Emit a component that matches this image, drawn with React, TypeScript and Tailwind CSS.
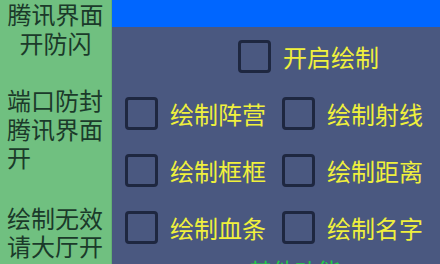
import React from "react";

const font = { fontFamily: '"Noto Sans CJK SC", "Noto Sans", sans-serif' };

function Box() {
  return <div className="h-[33px] w-[33px] shrink-0 rounded-[4px] border-[3px] border-[#1e2740]" />;
}

function Option({ label }: { label: string }) {
  return (
    <div className="flex items-center gap-[12px]">
      <Box />
      <span className="text-[24px] leading-[28px] text-[#f0f03c]">{label}</span>
    </div>
  );
}

export default function App() {
  return (
    <div className="flex h-[264px] w-[440px] overflow-hidden bg-[#4a5880]" style={font}>
      <div className="flex w-[112px] shrink-0 flex-col border-r border-[#64b074] bg-[#70c080] text-[24px] leading-[28.5px] text-[#1b3a2a]">
        <div className="text-center">
          腾讯界面
          <br />
          开防闪
        </div>
        <div className="mt-[29px] pl-[7px]">
          端口防封
          <br />
          腾讯界面
          <br />
          开
        </div>
        <div className="mt-[32px] pl-[7px]">
          绘制无效
          <br />
          请大厅开
        </div>
      </div>
      <div className="flex flex-1 flex-col">
        <div className="h-[27px] shrink-0 bg-[#0066ff]" />
        <div className="flex shrink-0 flex-col gap-[24px] pl-[13px] pt-[13px]">
          <div className="pl-[113px]">
            <Option label="开启绘制" />
          </div>
          <div className="grid grid-cols-[157px_1fr]">
            <Option label="绘制阵营" />
            <Option label="绘制射线" />
          </div>
          <div className="grid grid-cols-[157px_1fr]">
            <Option label="绘制框框" />
            <Option label="绘制距离" />
          </div>
          <div className="grid grid-cols-[157px_1fr]">
            <Option label="绘制血条" />
            <Option label="绘制名字" />
          </div>
        </div>
        <div className="mt-[12px] shrink-0 pl-[137px] text-[23px] leading-[28px] text-[#22cc44]">其他功能</div>
      </div>
    </div>
  );
}
